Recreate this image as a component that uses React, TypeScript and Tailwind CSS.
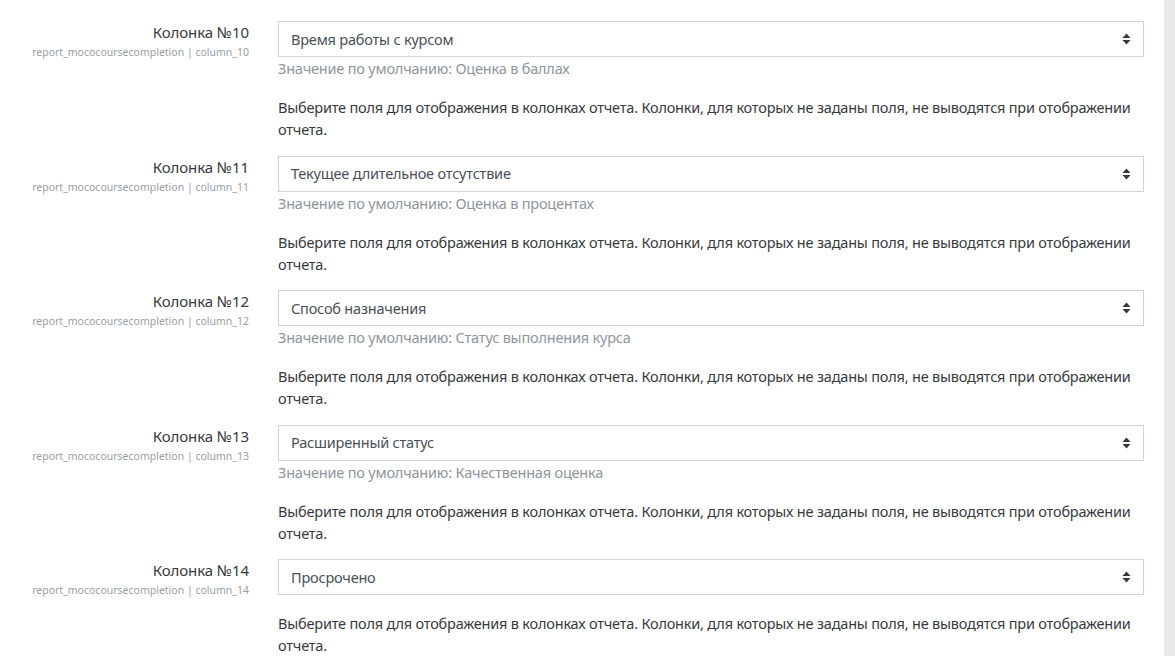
import React from 'react';

type Row = {
  num: number;
  value: string;
  def?: string;
};

const rows: Row[] = [
  { num: 10, value: 'Время работы с курсом', def: 'Оценка в баллах' },
  { num: 11, value: 'Текущее длительное отсутствие', def: 'Оценка в процентах' },
  { num: 12, value: 'Способ назначения', def: 'Статус выполнения курса' },
  { num: 13, value: 'Расширенный статус', def: 'Качественная оценка' },
  { num: 14, value: 'Просрочено' },
];

const DESC =
  'Выберите поля для отображения в колонках отчета. Колонки, для которых не заданы поля, не выводятся при отображении отчета.';

const SortArrows = () => (
  <svg width="9" height="12" viewBox="0 0 9 12" className="shrink-0">
    <path d="M4.5 0.5 L8.5 5 L0.5 5 Z" fill="#343a40" />
    <path d="M4.5 11.5 L8.5 7 L0.5 7 Z" fill="#343a40" />
  </svg>
);

const SettingRow = ({ row }: { row: Row }) => (
  <div className="flex mb-[15.5px]">
    <div className="w-[249px] shrink-0 text-right">
      <div className="text-[15px] tracking-[-0.1px] leading-[22px] text-[#373a3c]">Колонка №{row.num}</div>
      <div className="text-[10.5px] leading-[16px] text-[#999ea5] mt-[1px]">
        report_mococoursecompletion | column_{row.num}
      </div>
    </div>
    <div className="ml-[29px] w-[866px] shrink-0 text-[14.5px] tracking-[-0.2px]">
      <div className="h-[36px] border border-[#ced4da] bg-white flex items-center justify-between pl-[12px] pr-[12px]">
        <span className="text-[#495057] mt-[1px]">{row.value}</span>
        <SortArrows />
      </div>
      {row.def && (
        <div className="leading-[22px] text-[#8e959c]">
          Значение по умолчанию: {row.def}
        </div>
      )}
      <p className="mt-[17px] leading-[22px] text-[#373a3c] pr-[6px]">{DESC}</p>
    </div>
  </div>
);

export default function App() {
  return (
    <div
      className="h-[656px] w-[1175px] overflow-hidden bg-white flex"
      style={{ fontFamily: '"Noto Sans", "Open Sans", sans-serif' }}
    >
      <div className="flex-1 pt-[21px]">
        {rows.map((r) => (
          <SettingRow key={r.num} row={r} />
        ))}
      </div>
      <div className="w-[11px] bg-[#e9e9e9]" />
    </div>
  );
}
